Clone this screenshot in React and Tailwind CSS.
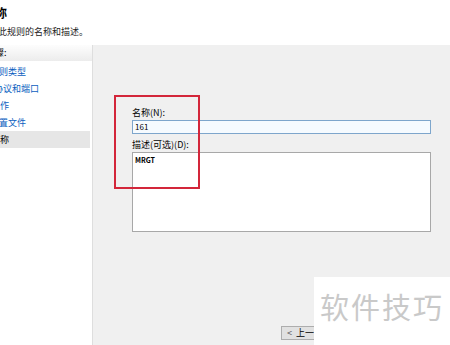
const font = "font-['Microsoft_YaHei','Noto_Sans_CJK_SC',sans-serif]";

const steps = [
  { label: "规则类型", shift: "ml-[-10px]" },
  { label: "协议和端口", shift: "ml-[-6px]" },
  { label: "操作", shift: "ml-[-9px]" },
  { label: "配置文件", shift: "ml-[-10px]" },
];

export default function App() {
  return (
    <div className={`relative h-[345px] w-[450px] overflow-hidden bg-white text-black ${font}`}>
      <header className="h-[45px] overflow-hidden bg-white">
        <h1 className="ml-[-17px] pt-[5px] text-[12px] font-bold leading-[16px]">名称</h1>
        <p className="ml-[-20px] mt-[5px] text-[9px] leading-[12px] text-[#222]">
          指定此规则的名称和描述。
        </p>
      </header>

      <div className="flex h-[300px]">
        <aside className="w-[93px] shrink-0 overflow-hidden border-r border-[#dedede] bg-white">
          <div className="h-[16px] overflow-hidden bg-gradient-to-b from-[#fdfdfd] to-[#ececec] text-[9px] leading-[16px]">
            <span className="ml-[-14px] block whitespace-nowrap">步骤:</span>
          </div>
          <ul className="pt-[2px]">
            {steps.map((step) => (
              <li
                key={step.label}
                className="h-[17px] overflow-hidden whitespace-nowrap text-[9px] leading-[17px] text-[#0b5ec0]"
              >
                <span className={`block ${step.shift}`}>{step.label}</span>
              </li>
            ))}
            <li className="mr-[2px] h-[17px] overflow-hidden whitespace-nowrap bg-[#e6e6e6] text-[9px] leading-[17px]">
              <span className="ml-[-9px] block">名称</span>
            </li>
          </ul>
        </aside>

        <main className="relative flex-1 bg-[#f0f0f0] pl-[39px] pr-[19px] pt-[61px]">
          <label className="block h-[14px] text-[9px] leading-[14px]">名称(N):</label>
          <div className="h-[14px] border border-[#7ea6cc] bg-[#f6fbff] pl-[2px] text-[8px] leading-[12px]">
            161
          </div>
          <label className="mt-[4px] block h-[14px] text-[9px] leading-[14px]">描述(可选)(D):</label>
          <div className="h-[80px] border border-[#a8a8a8] bg-white pl-[2px] pt-[2px] text-[7px] font-bold leading-[10px]">
            MRGT
          </div>

          <div className="mt-[94px] ml-[149px] flex h-[14px] w-[74px] items-center border border-[#adadad] bg-[#e1e1e1] pl-[5px] text-[9px] leading-[12px]">
            <span className="mr-[4px] text-[#555]">&lt;</span>
            <span>上一步(B)</span>
          </div>

          <div className="absolute left-[21px] top-[50px] h-[94px] w-[86px] border-2 border-[#d3263a]" />
        </main>
      </div>

      <div className="absolute left-[314px] top-[277px] flex h-[68px] w-[136px] items-center justify-center bg-white">
        <span className="mt-[-9px] text-[29px] leading-none tracking-[2px] text-[#c9c9c9]">软件技巧</span>
      </div>
    </div>
  );
}
